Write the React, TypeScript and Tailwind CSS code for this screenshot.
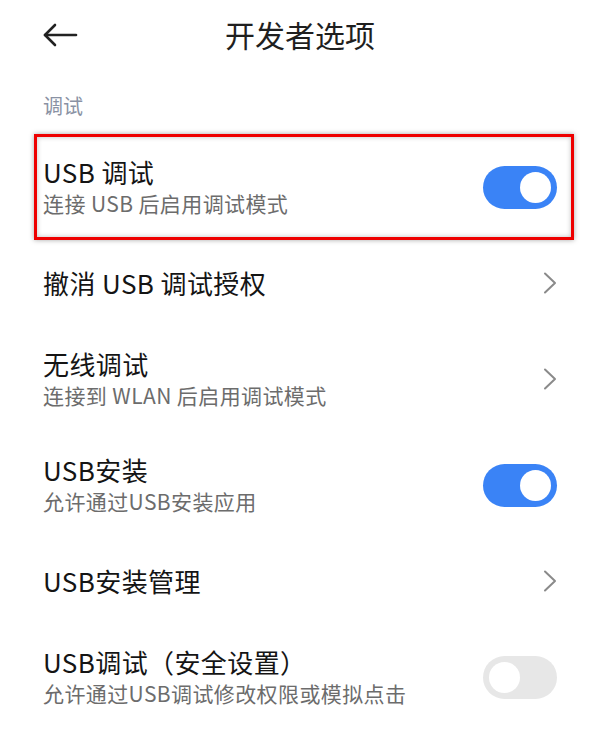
import React from 'react';

type Row = {
    title: string;
    subtitle?: string;
    kind: 'toggle-on' | 'toggle-off' | 'chevron';
    highlighted?: boolean;
};

const rows: Row[] = [
    { title: 'USB 调试', subtitle: '连接 USB 后启用调试模式', kind: 'toggle-on', highlighted: true },
    { title: '撤消 USB 调试授权', kind: 'chevron' },
    { title: '无线调试', subtitle: '连接到 WLAN 后启用调试模式', kind: 'chevron' },
    { title: 'USB安装', subtitle: '允许通过USB安装应用', kind: 'toggle-on' },
    { title: 'USB安装管理', kind: 'chevron' },
    { title: 'USB调试（安全设置）', subtitle: '允许通过USB调试修改权限或模拟点击', kind: 'toggle-off' },
];

const BackArrow = () => (
    <svg width="36" height="26" viewBox="0 0 36 26" fill="none" stroke="#222" strokeWidth="2.6" strokeLinecap="round" strokeLinejoin="round">
        <path d="M34 13 H3" />
        <path d="M13 3 L3 13 L13 23" />
    </svg>
);

const Chevron = () => (
    <svg width="14" height="22" viewBox="0 0 14 22" fill="none" stroke="#8a8a8a" strokeWidth="2" strokeLinecap="round" strokeLinejoin="round">
        <path d="M2 1.5 L12 11 L2 20.5" />
    </svg>
);

const Toggle: React.FC<{ on: boolean }> = ({ on }) => (
    <div className={`w-[74px] h-[43px] rounded-full flex items-center px-[6px] ${on ? 'bg-[#3a83f6] justify-end' : 'bg-[#e7e7e7] justify-start'}`}>
        <div className="w-[31px] h-[31px] rounded-full bg-white" />
    </div>
);

const SettingRow: React.FC<{ row: Row }> = ({ row }) => (
    <div className={`relative flex items-center justify-between px-[43px] ${row.subtitle ? 'h-[106px]' : 'h-[86px]'}`}>
        <div className="flex flex-col gap-[2px] tracking-[0.4px]">
            <div className="text-[26px] leading-[30px] text-[#141414]">{row.title}</div>
            {row.subtitle && <div className="text-[21px] leading-[28px] text-[#6c6c6c]">{row.subtitle}</div>}
        </div>
        {row.kind === 'chevron' ? <Chevron /> : <Toggle on={row.kind === 'toggle-on'} />}
        {row.highlighted && (
            <div className="absolute left-[34px] right-[26px] top-0 bottom-0 border-[3px] border-[#ee0000] shadow-[0_0_5px_rgba(0,0,0,0.35),inset_0_0_5px_rgba(0,0,0,0.25)] pointer-events-none" />
        )}
    </div>
);

export default function App() {
    return (
        <div className="w-[600px] h-[739px] bg-white overflow-hidden font-['Noto_Sans_CJK_SC','Noto_Sans',sans-serif]">
            <div className="h-[72px] grid grid-cols-[1fr_auto_1fr] items-center px-[42px]">
                <div className="pb-[3px]">
                    <BackArrow />
                </div>
                <div className="text-[30px] text-[#1f1f1f] pb-[3px]">开发者选项</div>
                <div />
            </div>
            <div className="pt-[23px] pb-[17px] px-[43px] text-[20px] leading-[22px] text-[#8a92a4]">调试</div>
            {rows.map((row) => (
                <SettingRow key={row.title} row={row} />
            ))}
        </div>
    );
}
